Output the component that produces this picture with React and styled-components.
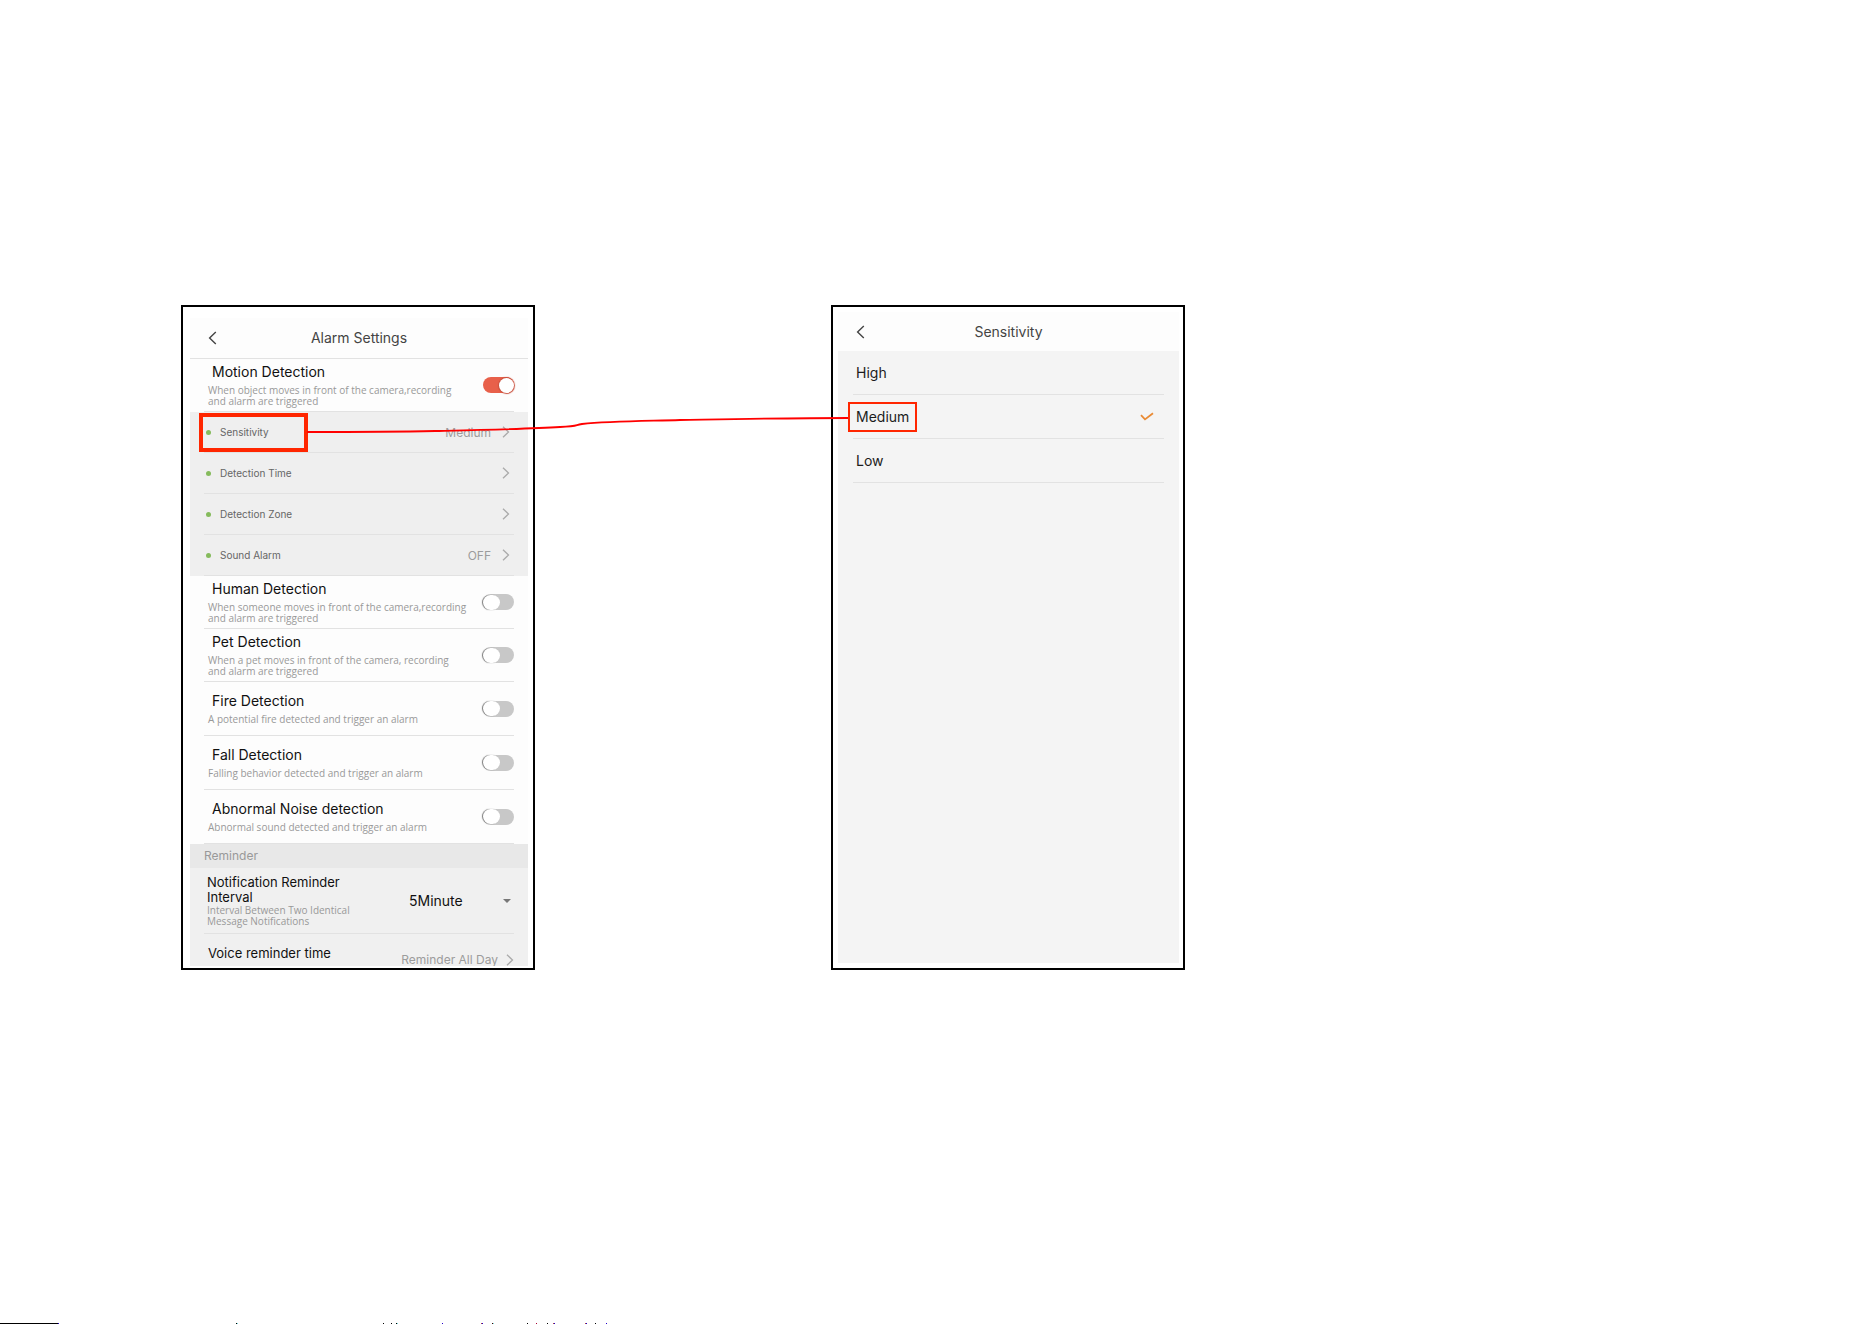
import React, { useState } from "react";
import styled, { createGlobalStyle, css } from "styled-components";

const GlobalStyle = createGlobalStyle`
  *, *::before, *::after { box-sizing: border-box; }
  body {
    margin: 0;
    background: #fff;
    font-family: Inter, "Open Sans", sans-serif;
    color: #111;
  }
  button, select, input { font: inherit; color: inherit; margin: 0; }
`;

const Page = styled.div`
  min-height: 100vh;
  display: flex;
  flex-direction: column;
`;

const Board = styled.main`
  position: relative;
  flex: 1;
  display: grid;
  grid-template-columns: minmax(0, 354px) minmax(0, 354px);
  column-gap: 296px;
  align-items: start;
  padding: 305px 0 40px 181px;
`;

const Phone = styled.section`
  height: 665px;
  border: 2px solid #000;
  padding: ${(p) => p.$pad};
`;

const Screen = styled.div`
  height: 100%;
  overflow: hidden;
  display: flex;
  flex-direction: column;
  background: #fdfdfd;
`;

const Header = styled.header`
  flex: none;
  height: ${(p) => p.$height}px;
  display: grid;
  grid-template-columns: 40px 1fr 40px;
  align-items: center;
  padding: 0 5px;
`;

const Title = styled.h1`
  margin: 0;
  font-size: 14px;
  line-height: 18px;
  font-weight: 400;
  text-align: center;
  color: #444;
`;

const BackButton = styled.button`
  display: flex;
  border: 0;
  padding: 4px 13px;
  background: none;
  color: #444;
`;

const divider = css`
  border-bottom: 1px solid #e2e2e2;
`;

const HeaderRule = styled.div`
  flex: none;
  ${divider}
`;

const SwitchRow = styled.label`
  flex: none;
  height: ${(p) => (p.$tall ? 54 : 53)}px;
  margin: 0 14px;
  display: flex;
  align-items: center;
  justify-content: space-between;
  ${divider}
`;

const RowText = styled.span`
  display: flex;
  flex-direction: column;
  gap: 5px;
`;

const RowTitle = styled.span`
  padding-left: ${(p) => p.$inset}px;
  font-size: ${(p) => p.$size}px;
  line-height: ${(p) => p.$line}px;
  color: #111;
`;

const RowNote = styled.span`
  padding-left: ${(p) => p.$inset}px;
  font-family: "Open Sans", sans-serif;
  font-size: 10px;
  line-height: 11px;
  color: #999;
  white-space: pre;
`;

const Switch = styled.input`
  appearance: none;
  flex: none;
  width: 31px;
  height: 16px;
  border-radius: 8px;
  display: flex;
  align-items: center;
  background: #c8c8c8;
  &::before {
    content: "";
    width: 17px;
    height: 15px;
    border-radius: 8px;
    background: #fff;
    box-shadow: -1px 0 1px #777;
  }
  &:checked {
    justify-content: flex-end;
    background: #e8604a;
  }
  &:checked::before {
    width: 15px;
    box-shadow: 0 0 1px 1px #c9503d;
  }
`;

const SubList = styled.div`
  flex: none;
  background: #efefef;
  padding: 0 14px;
`;

const SubRow = styled.button`
  position: relative;
  width: 100%;
  height: 41px;
  display: flex;
  align-items: center;
  border: 0;
  ${divider}
  background: none;
  padding: 0 4px 0 2px;
  font-size: 10px;
  color: #666;
  text-align: left;
`;

const Dot = styled.span`
  width: 5px;
  height: 5px;
  border-radius: 50%;
  margin-right: 9px;
  background: #85bb5c;
`;

const Value = styled.span`
  margin-left: auto;
  margin-right: ${(p) => p.$gap}px;
  font-size: 12px;
  color: #9c9c9c;
`;

const Highlight = styled.span`
  position: absolute;
  border: ${(p) => p.$weight}px solid #ff2600;
  inset: ${(p) => p.$inset};
  pointer-events: none;
`;

const SectionHeading = styled.h2`
  flex: none;
  margin: 0;
  padding: 0 14px;
  font-size: 12px;
  line-height: 24px;
  font-weight: 400;
  background: #e8e8e8;
  color: #999;
`;

const ReminderList = styled.div`
  flex: none;
  background: #f0f0f0;
  padding: 0 14px;
`;

const IntervalRow = styled.div`
  height: 66px;
  display: flex;
  align-items: center;
  justify-content: space-between;
  padding: 0 3px;
  ${divider}
`;

const IntervalLabel = styled.label`
  width: 150px;
  display: flex;
  flex-direction: column;
`;

const SelectWrap = styled.span`
  display: grid;
  grid-template-columns: 102px;
  align-items: center;
  justify-items: end;
  & > * { grid-area: 1 / 1; }
  & > svg { pointer-events: none; }
`;

const Select = styled.select`
  appearance: none;
  width: 100%;
  border: 0;
  padding: 0;
  background: none;
  font-size: 14px;
  line-height: 18px;
  color: #111;
`;

const VoiceRow = styled.button`
  width: 100%;
  height: 51px;
  display: flex;
  align-items: center;
  border: 0;
  padding: 0 0 0 4px;
  background: none;
  text-align: left;
`;

const VoiceTitle = styled(RowTitle)`
  align-self: flex-start;
  padding-top: 11px;
`;

const Options = styled.fieldset`
  flex: 1;
  min-width: 0;
  margin: 0;
  border: 0;
  padding: 0 15px;
  background: #f4f4f4;
`;

const Option = styled.label`
  position: relative;
  height: 44px;
  display: flex;
  align-items: center;
  justify-content: space-between;
  padding: 0 10px 0 3px;
  font-size: 14px;
  color: #1c1c1c;
  ${divider}
`;

const Radio = styled.input`
  appearance: none;
  position: absolute;
  inset: 0;
`;

const Connector = styled.svg`
  position: absolute;
  left: 0;
  top: 0;
  pointer-events: none;
`;

const BottomEdge = styled.svg`
  display: block;
  width: 100%;
  height: 1px;
`;

function BackIcon() {
  return (
    <svg width="9" height="14" viewBox="0 0 9 14" fill="none" stroke="currentColor" strokeWidth="1.4">
      <path d="M7.8 1 1.6 7l6.2 6" />
    </svg>
  );
}

function Chevron() {
  return (
    <svg width="8" height="12" viewBox="0 0 8 12" fill="none" stroke="#aaa" strokeWidth="1.3">
      <path d="M1 .8 6.5 6 1 11.2" />
    </svg>
  );
}

function Detection({ title, note, tall, on }) {
  const [checked, setChecked] = useState(Boolean(on));
  return (
    <SwitchRow $tall={tall}>
      <RowText>
        <RowTitle $inset={8} $size={14} $line={17}>{title}</RowTitle>
        <RowNote $inset={4}>{note}</RowNote>
      </RowText>
      <Switch type="checkbox" checked={checked} onChange={(e) => setChecked(e.target.checked)} />
    </SwitchRow>
  );
}

function AlarmSettings() {
  return (
    <Phone $pad="11px 5px 2px 7px">
      <Screen>
        <Header $height={40}>
          <BackButton aria-label="Back"><BackIcon /></BackButton>
          <Title>Alarm Settings</Title>
        </Header>
        <HeaderRule />
        <Detection on title="Motion Detection" note={"When object moves in front of the camera,recording\nand alarm are triggered"} />
        <SubList>
          <SubRow>
            <Dot />Sensitivity<Value $gap={11}>Medium</Value><Chevron />
            <Highlight $weight={4} $inset="1px 206px 0 -5px" />
          </SubRow>
          <SubRow><Dot />Detection Time<Value $gap={11} /><Chevron /></SubRow>
          <SubRow><Dot />Detection Zone<Value $gap={11} /><Chevron /></SubRow>
          <SubRow><Dot />Sound Alarm<Value $gap={11}>OFF</Value><Chevron /></SubRow>
        </SubList>
        <Detection title="Human Detection" note={"When someone moves in front of the camera,recording\nand alarm are triggered"} />
        <Detection title="Pet Detection" note={"When a pet moves in front of the camera, recording\nand alarm are triggered"} />
        <Detection tall title="Fire Detection" note="A potential fire detected and trigger an alarm" />
        <Detection tall title="Fall Detection" note="Falling behavior detected and trigger an alarm" />
        <Detection tall title="Abnormal Noise detection" note="Abnormal sound detected and trigger an alarm" />
        <SectionHeading>Reminder</SectionHeading>
        <ReminderList>
          <IntervalRow>
            <IntervalLabel htmlFor="interval">
              <RowTitle $inset={0} $size={13} $line={15}>Notification Reminder Interval</RowTitle>
              <RowNote $inset={0}>{"Interval Between Two Identical\nMessage Notifications"}</RowNote>
            </IntervalLabel>
            <SelectWrap>
              <Select id="interval" defaultValue="5">
                <option value="5">5Minute</option>
                <option value="10">10Minute</option>
              </Select>
              <svg width="8" height="4" viewBox="0 0 8 4"><path d="M0 0h8L4 4z" fill="#777" /></svg>
            </SelectWrap>
          </IntervalRow>
          <VoiceRow>
            <VoiceTitle $inset={0} $size={13} $line={17}>Voice reminder time</VoiceTitle>
            <Value $gap={8}>Reminder All Day</Value>
            <Chevron />
          </VoiceRow>
        </ReminderList>
      </Screen>
    </Phone>
  );
}

function SensitivityScreen() {
  const [level, setLevel] = useState("Medium");
  return (
    <Phone $pad="5px 4px 5px 5px">
      <Screen>
        <Header $height={39}>
          <BackButton aria-label="Back"><BackIcon /></BackButton>
          <Title>Sensitivity</Title>
        </Header>
        <Options aria-label="Sensitivity">
          {["High", "Medium", "Low"].map((name) => (
            <Option key={name}>
              <Radio type="radio" name="level" checked={level === name} onChange={() => setLevel(name)} />
              {name}
              {level === name && (
                <svg width="14" height="9" viewBox="0 0 14 9" fill="none" stroke="#e98b35" strokeWidth="1.8">
                  <path d="M1 3.2 5 7.4 13 1.2" />
                </svg>
              )}
              {name === "Medium" && <Highlight $weight={2} $inset="7px 247px 6px -5px" />}
            </Option>
          ))}
        </Options>
      </Screen>
    </Phone>
  );
}

// [start, width, colour] of each mark along the lower edge of the sheet
const edgeMarks = [
  [0, 58, "#000"], [58, 1, "#20c"], [236, 1, "#000"], [237, 1, "#7dd"],
  [383, 1, "#000"], [391, 1, "#000"], [396, 1, "#000"], [397, 1, "#7dd"],
  [442, 1, "#20c"], [481, 1, "#a44"], [482, 1, "#20c"], [492, 1, "#400"], [493, 1, "#7dd"],
  [527, 1, "#000"], [536, 1, "#a03"], [547, 1, "#000"], [553, 1, "#a44"], [554, 1, "#20c"],
  [585, 1, "#a44"], [586, 1, "#20c"], [595, 1, "#000"], [606, 1, "#20c"],
];

export default function App() {
  return (
    <Page>
      <GlobalStyle />
      <Board>
        <AlarmSettings />
        <SensitivityScreen />
        <Connector width="860" height="440" fill="none" stroke="#ff0000" strokeWidth="1.8">
          <path d="M307 432 C350 432 390 432 435 431 C480 430 530 429 560 427 C580 426 574 425 582 424 C610 421 650 421 680 420 C740 419 790 418 848 418" />
        </Connector>
      </Board>
      <BottomEdge aria-hidden="true">
        {edgeMarks.map(([x, w, fill]) => (
          <rect key={x} x={x} y="0" width={w} height="1" fill={fill} />
        ))}
      </BottomEdge>
    </Page>
  );
}
